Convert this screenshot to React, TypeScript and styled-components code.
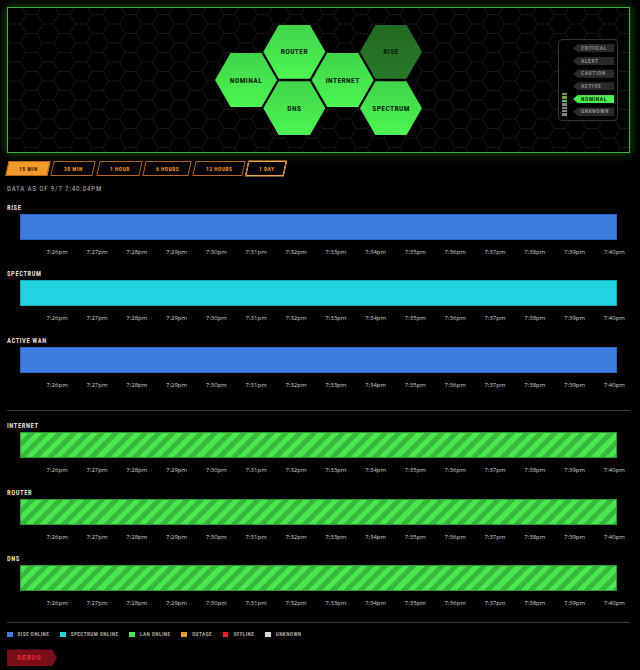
import styled, { createGlobalStyle, css } from 'styled-components'

const CONDENSED = `"Roboto Condensed", "DejaVu Sans Condensed", "DejaVu Sans", sans-serif`

const GlobalStyle = createGlobalStyle`
	html, body {
		margin: 0;
		background: #000;
	}
	body {
		font-family: ${CONDENSED};
		color: #ddd;
	}
`

type BarKind = 'rise' | 'spectrum' | 'lan'

const TICKS = Array.from({ length: 15 }, (_, i) => ({
	label: `7:${26 + i}pm`,
	at: ((56 + 60 * i) / 900) * 100,
}))

const Page = styled.div`
	padding: 7px 10px 4px 7px;
`

/* ---------- hex status panel ---------- */

const HexPanel = styled.section`
	position: relative;
	height: 146px;
	box-sizing: border-box;
	border: 1px solid #3fae3f;
	box-shadow: 0 0 9px 1px rgba(60, 190, 60, 0.4);
	display: flex;
	align-items: center;
	justify-content: center;
	overflow: hidden;
`

const Backdrop = styled.svg`
	position: absolute;
	inset: 0;
	width: 100%;
	height: 100%;
`

const Cluster = styled.div`
	position: relative;
	display: flex;
	align-items: center;
`

const HexColumn = styled.div`
	display: flex;
	flex-direction: column;
	gap: 2.5px;
	& + & {
		margin-left: -13.7px;
	}
`

const Hex = styled.div<{ $dim?: boolean }>`
	width: 62px;
	height: 54px;
	clip-path: polygon(25% 0, 75% 0, 100% 50%, 75% 100%, 25% 100%, 0 50%);
	background: ${(p) =>
		p.$dim
			? 'linear-gradient(180deg, #226a22, #2a7a2a)'
			: 'linear-gradient(180deg, #3fd549, #4ef553)'};
	display: flex;
	align-items: center;
	justify-content: center;
	font-size: 7.5px;
	font-weight: 700;
	letter-spacing: 0.4px;
	color: #0d2410;
`

const StatusLegend = styled.div`
	position: absolute;
	right: 11px;
	top: 50%;
	transform: translateY(-50%);
	display: flex;
	padding: 4px 3px;
	border: 1px solid #383838;
	border-radius: 4px;
	background: rgba(0, 0, 0, 0.7);
`

const LevelMeter = styled.div`
	align-self: flex-end;
	display: flex;
	flex-direction: column;
	gap: 1px;
	width: 5px;
	margin-right: 6px;
`

const Level = styled.div<{ $tone: 'on' | 'lit' | 'off' }>`
	height: 2.4px;
	background: ${(p) => (p.$tone === 'on' ? '#76a844' : p.$tone === 'lit' ? '#5fd35f' : '#8a8a8a')};
`

const TagList = styled.div`
	display: flex;
	flex-direction: column;
	gap: 4.3px;
`

const Tag = styled.div<{ $active?: boolean }>`
	width: 41px;
	height: 8.4px;
	box-sizing: border-box;
	padding-left: 8px;
	clip-path: polygon(5px 0, 100% 0, 100% 100%, 5px 100%, 0 50%);
	background: ${(p) => (p.$active ? '#4cef50' : '#2a2a2a')};
	color: ${(p) => (p.$active ? '#0e2e10' : '#8c8c8c')};
	font-size: 5.5px;
	font-weight: 700;
	letter-spacing: 0.6px;
	line-height: 8.4px;
`

/* ---------- range tabs ---------- */

const RangeTabs = styled.div`
	display: flex;
	gap: 3.5px;
	margin: 7.7px 0 0 0;
`

const RangeTab = styled.button<{ $active?: boolean; $focus?: boolean }>`
	height: 15px;
	padding: 0 10.5px;
	transform: skewX(-12deg);
	border: 1px solid ${(p) => (p.$focus ? '#f4a445' : '#b8661a')};
	background: ${(p) => (p.$active ? '#f39a2c' : 'transparent')};
	color: ${(p) => (p.$active ? '#3a1a00' : '#f39a2c')};
	font-family: ${CONDENSED};
	font-size: 5.5px;
	font-weight: 700;
	letter-spacing: 0.5px;
	cursor: pointer;
	${(p) =>
		p.$focus &&
		css`
			box-shadow: 0 0 0 0.5px #f4a445;
		`}
	span {
		display: inline-block;
		transform: skewX(12deg);
	}
`

const Stamp = styled.div`
	margin-top: 8.6px;
	line-height: 10px;
	font-size: 7px;
	letter-spacing: 0.8px;
	color: #b5b3aa;
`

/* ---------- timelines ---------- */

const Group = styled.div<{ $top: number }>`
	margin-top: ${(p) => p.$top}px;
`

const Track = styled.div`
	& + & {
		margin-top: 13.5px;
	}
`

const TrackLabel = styled.div`
	line-height: 8px;
	font-size: 6.5px;
	font-weight: 700;
	letter-spacing: 0.6px;
	color: #e6dfcc;
`

const barFill: Record<BarKind, ReturnType<typeof css>> = {
	rise: css`
		background: #3e7de0;
		border-color: #2f66c4;
	`,
	spectrum: css`
		background: #22d4e2;
		border-color: #17a9b6;
	`,
	lan: css`
		background: repeating-linear-gradient(
			135deg,
			#4ae64f 0,
			#4ae64f 5px,
			#38b83c 5px,
			#38b83c 10px
		);
		border-color: #2f9a33;
	`,
}

const Bar = styled.div<{ $kind: BarKind }>`
	margin: 2px 13px 0;
	height: 26px;
	box-sizing: border-box;
	border: 1px solid;
	${(p) => barFill[p.$kind]}
`

const Axis = styled.div`
	position: relative;
	height: 10px;
	margin: 7px 13px 0;
`

const Tick = styled.span`
	position: absolute;
	top: 0;
	transform: translateX(-50%);
	line-height: 10px;
	font-family: 'Open Sans', 'DejaVu Sans', sans-serif;
	font-size: 6px;
	color: #d2d2d2;
	white-space: nowrap;
`

const Divider = styled.hr<{ $after: number }>`
	margin: 0 0 ${(p) => p.$after}px;
	border: 0;
	border-top: 1px solid #3c3c3c;
`

/* ---------- footer ---------- */

const Legend = styled.div`
	display: flex;
	align-items: center;
	gap: 11px;
	line-height: 10px;
`

const LegendItem = styled.div`
	display: flex;
	align-items: center;
	gap: 5px;
	font-size: 5.3px;
	font-weight: 700;
	letter-spacing: 0.4px;
	color: #a9a69a;
`

const Swatch = styled.span<{ $color: string }>`
	width: 5.5px;
	height: 5.5px;
	background: ${(p) => p.$color};
`

const DebugButton = styled.button`
	display: block;
	margin-top: 10px;
	width: 50px;
	height: 17px;
	padding: 0 5px 0 0;
	border: 0;
	background: #780f16;
	clip-path: polygon(0 0, calc(100% - 5px) 0, 100% 50%, calc(100% - 5px) 100%, 0 100%);
	color: #e3283a;
	font-family: ${CONDENSED};
	font-size: 7px;
	font-weight: 700;
	letter-spacing: 1px;
`

const Timeline = ({ label, kind }: { label: string; kind: BarKind }) => (
	<Track>
		<TrackLabel>{label}</TrackLabel>
		<Bar $kind={kind} />
		<Axis>
			{TICKS.map((t) => (
				<Tick key={t.label} style={{ left: `${t.at}%` }}>
					{t.label}
				</Tick>
			))}
		</Axis>
	</Track>
)

const HexBackdrop = () => (
	<Backdrop>
		<defs>
			<pattern id='hexgrid' width='33' height='19' patternUnits='userSpaceOnUse' x='-4' y='-3'>
				<path
					d='M0 9.5 L5.5 0 L16.5 0 L22 9.5 L16.5 19 L5.5 19 Z M22 9.5 L33 9.5'
					fill='none'
					stroke='#171717'
					strokeWidth='1'
				/>
			</pattern>
		</defs>
		<rect width='100%' height='100%' fill='url(#hexgrid)' />
	</Backdrop>
)

const LEVELS: ('on' | 'lit' | 'off')[] = ['on', 'on', 'lit', 'off', 'off', 'off', 'off']
const STATES = ['CRITICAL', 'ALERT', 'CAUTION', 'ACTIVE', 'NOMINAL', 'UNKNOWN']
const RANGES = ['15 MIN', '30 MIN', '1 HOUR', '6 HOURS', '12 HOURS', '1 DAY']
const KEYS = [
	{ name: 'RISE ONLINE', color: '#3e7de0' },
	{ name: 'SPECTRUM ONLINE', color: '#22d4e2' },
	{ name: 'LAN ONLINE', color: '#4ae64f' },
	{ name: 'OUTAGE', color: '#f39a2c' },
	{ name: 'OFFLINE', color: '#ff1f35' },
	{ name: 'UNKNOWN', color: '#d8d8d8' },
]

const App = () => {
	return (
		<Page>
			<GlobalStyle />
			<HexPanel>
				<HexBackdrop />
				<Cluster>
					<HexColumn>
						<Hex>NOMINAL</Hex>
					</HexColumn>
					<HexColumn>
						<Hex>ROUTER</Hex>
						<Hex>DNS</Hex>
					</HexColumn>
					<HexColumn>
						<Hex>INTERNET</Hex>
					</HexColumn>
					<HexColumn>
						<Hex $dim>RISE</Hex>
						<Hex>SPECTRUM</Hex>
					</HexColumn>
				</Cluster>
				<StatusLegend>
					<LevelMeter>
						{LEVELS.map((l, i) => (
							<Level key={i} $tone={l} />
						))}
					</LevelMeter>
					<TagList>
						{STATES.map((s) => (
							<Tag key={s} $active={s === 'NOMINAL'}>
								{s}
							</Tag>
						))}
					</TagList>
				</StatusLegend>
			</HexPanel>

			<RangeTabs>
				{RANGES.map((r) => (
					<RangeTab key={r} $active={r === '15 MIN'} $focus={r === '1 DAY'}>
						<span>{r}</span>
					</RangeTab>
				))}
			</RangeTabs>

			<Stamp>DATA AS OF 9/7 7:40:04PM</Stamp>

			<Group $top={9.7}>
				<Timeline label='RISE' kind='rise' />
				<Timeline label='SPECTRUM' kind='spectrum' />
				<Timeline label='ACTIVE WAN' kind='rise' />
			</Group>
			<Group $top={20.5}>
				<Divider $after={11} />
				<Timeline label='INTERNET' kind='lan' />
				<Timeline label='ROUTER' kind='lan' />
				<Timeline label='DNS' kind='lan' />
			</Group>
			<Group $top={14}>
				<Divider $after={6} />
				<Legend>
					{KEYS.map((k) => (
						<LegendItem key={k.name}>
							<Swatch $color={k.color} />
							{k.name}
						</LegendItem>
					))}
				</Legend>
				<DebugButton>DEBUG</DebugButton>
			</Group>
		</Page>
	)
}

export default App
